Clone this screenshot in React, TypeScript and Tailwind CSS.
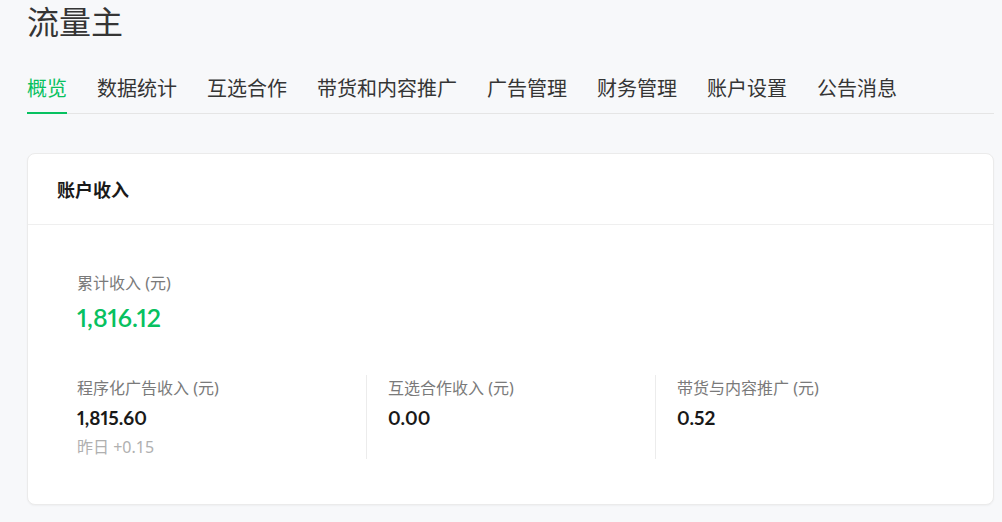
import React from "react";

const tabs = [
  "概览",
  "数据统计",
  "互选合作",
  "带货和内容推广",
  "广告管理",
  "财务管理",
  "账户设置",
  "公告消息",
];

const stats = [
  { label: "程序化广告收入 (元)", value: "1,815.60", sub: "昨日 +0.15" },
  { label: "互选合作收入 (元)", value: "0.00" },
  { label: "带货与内容推广 (元)", value: "0.52" },
];

const numFont = { fontFamily: 'Lato, "Noto Sans", sans-serif' };

const App = () => {
  return (
    <div
      className="min-h-[522px] bg-[#f7f8fa] pt-[2px] pl-[27px] pr-[8px] pb-[18px]"
      style={{ fontFamily: '"Noto Sans", "Noto Sans CJK SC", sans-serif' }}
    >
      <h1 className="text-[32px] leading-[40px] text-[#353535]">流量主</h1>

      {/* tabs */}
      <nav className="mt-[33px] flex gap-[30px] border-b border-[#e5e5e5]">
        {tabs.map((t, i) => (
          <div
            key={t}
            className={
              i === 0
                ? "-mb-px border-b-2 border-[#07c160] pb-[9px] text-[20px] leading-[28px] text-[#07c160]"
                : "pb-[10px] text-[20px] leading-[28px] text-[#353535]"
            }
          >
            {t}
          </div>
        ))}
      </nav>

      {/* card */}
      <div className="mt-[39px] rounded-lg border border-[#ebebeb] bg-white shadow-[0_1px_2px_rgba(0,0,0,0.04)]">
        <div className="flex h-[71px] items-center border-b border-[#efefef] px-[29px] pt-[3px]">
          <h3 className="text-[18px] font-bold text-[#1a1a1a]">账户收入</h3>
        </div>

        <div className="px-[49px] pt-[46px] pb-[45px]">
          <div className="text-[16px] leading-[24px] text-[#7a7a7a]">累计收入 (元)</div>
          <div
            className="mt-[4px] text-[25px] font-semibold leading-[36px] text-[#07c160] proportional-nums"
            style={numFont}
          >
            1,816.12
          </div>

          <div className="mt-[40px] grid grid-cols-3">
            {stats.map((s, i) => (
              <div
                key={s.label}
                className={
                  i === 0
                    ? "h-[84px] pt-px"
                    : "h-[84px] border-l border-[#ececec] pt-px pl-[21px]"
                }
              >
                <div className="text-[16px] leading-[24px] text-[#7a7a7a]">{s.label}</div>
                <div
                  className="mt-[5px] text-[19px] font-bold leading-[26px] text-[#191919] proportional-nums"
                  style={numFont}
                >
                  {s.value}
                </div>
                {s.sub && (
                  <div className="mt-[4px] text-[16px] leading-[24px] text-[#b0b0b0]">
                    {s.sub}
                  </div>
                )}
              </div>
            ))}
          </div>
        </div>
      </div>
    </div>
  );
};

export default App;
